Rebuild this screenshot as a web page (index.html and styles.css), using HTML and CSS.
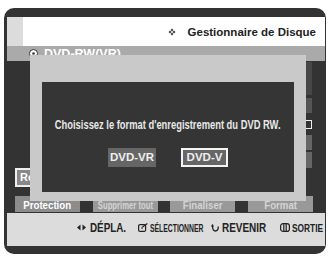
FILE: index.html
```html
<!DOCTYPE html>
<html>
<head>
    <title>Gestionnaire de Disque</title>
    <link rel="stylesheet" href="styles.css">
</head>
<body>
    <div class="frame">
        <div class="screen">
            <div class="top">
                <div class="tab"></div>
                <div class="title">
                    <svg class="title-icon" width="8" height="8" viewBox="0 0 8 8">
                        <path d="M4 0.5 L5.5 2 L4 3.5 L2.5 2 Z M4 4.5 L5.5 6 L4 7.5 L2.5 6 Z M2 2.5 L3.5 4 L2 5.5 L0.5 4 Z M6 2.5 L7.5 4 L6 5.5 L4.5 4 Z" fill="#444"/>
                    </svg>
                    <span>Gestionnaire de Disque</span>
                </div>
            </div>
            <div class="disc-bar">
                <svg class="disc" width="9" height="9" viewBox="0 0 9 9">
                    <circle cx="4.5" cy="4.5" r="4" fill="#fff" stroke="#333" stroke-width="1"/>
                    <circle cx="4.5" cy="4.5" r="1.3" fill="#333"/>
                </svg>
                <span>DVD-RW(VR)</span>
            </div>
            <div class="content">
                <div class="info-row row-a"></div>
                <div class="info-row row-b"></div>
                <div class="info-row row-check"><span class="check"></span></div>
                <div class="info-row row-c"></div>
                <div class="info-row row-d"></div>
                <div class="rename-btn">Renommer</div>
            </div>
            <div class="actions">
                <div class="action current"><span class="narrow">Protection</span></div>
                <div class="action"><span class="narrow tight">Supprimer tout</span></div>
                <div class="action"><span class="narrow">Finaliser</span></div>
                <div class="action"><span class="narrow">Format</span></div>
            </div>
            <div class="hints">
                <div class="hint hint-move">
                    <svg width="9" height="7" viewBox="0 0 9 7"><path d="M0 3.5 L3.5 0.5 L3.5 6.5 Z M9 3.5 L5.5 0.5 L5.5 6.5 Z" fill="#222"/></svg>
                    <span class="hint-text">DÉPLA.</span>
                </div>
                <div class="hint hint-select">
                    <svg width="10" height="9" viewBox="0 0 10 9"><rect x="0.6" y="1.6" width="7" height="6.8" rx="1.5" fill="none" stroke="#222" stroke-width="1.2"/><path d="M3 5 L5 5 M4.5 4 L9.4 0.6" stroke="#222" stroke-width="1.2" fill="none"/></svg>
                    <span class="hint-text">SÉLECTIONNER</span>
                </div>
                <div class="hint hint-back">
                    <svg width="8" height="9" viewBox="0 0 8 9"><path d="M1.5 3 C1.5 6 2.5 8 4.5 8 C6.5 8 7.3 6 7.3 3.5" stroke="#222" stroke-width="1.3" fill="none"/><path d="M0 3.6 L1.5 0.8 L3 3.6 Z" fill="#222"/></svg>
                    <span class="hint-text">REVENIR</span>
                </div>
                <div class="hint hint-exit">
                    <svg width="10" height="9" viewBox="0 0 10 9"><rect x="0.6" y="0.6" width="8.8" height="7.8" rx="2.5" fill="none" stroke="#222" stroke-width="1.2"/><path d="M3.8 1 L3.8 8 M6.2 1 L6.2 8" stroke="#222" stroke-width="1.2"/></svg>
                    <span class="hint-text">SORTIE</span>
                </div>
            </div>

            <div class="dialog">
                <div class="dialog-body">
                    <p class="message">Choisissez le format d'enregistrement du DVD RW.</p>
                    <div class="choices">
                        <div class="choice">DVD-VR</div>
                        <div class="choice selected">DVD-V</div>
                    </div>
                </div>
            </div>
        </div>
    </div>
</body>
</html>
```

FILE: styles.css
```css
body {
    margin: 0;
    background: #fff;
    font-family: "Liberation Sans", Arial, sans-serif;
}

.frame {
    margin: 8px 0 0 4px;
    width: 322px;
    height: 246px;
    box-sizing: border-box;
    padding: 9px 2px 8px 3px;
    background: #333;
    border-radius: 10px;
}

.screen {
    position: relative;
    width: 318px;
    height: 229px;
    display: flex;
    flex-direction: column;
    background: #333;
}

.top {
    height: 29px;
    display: flex;
}

.tab {
    width: 16px;
    background: #dcdcdc;
}

.title {
    flex: 1;
    background: #fff;
    display: flex;
    align-items: center;
    justify-content: flex-end;
    padding-right: 9px;
    font-size: 11.5px;
    font-weight: bold;
    color: #222;
}

.title-icon {
    margin-right: 12px;
}

.disc-bar {
    height: 15px;
    background: #aaa;
    display: flex;
    align-items: center;
    padding-left: 22px;
    color: #fff;
    font-size: 12.5px;
    font-weight: bold;
}

.disc {
    margin-right: 6px;
}

.content {
    flex: 1;
    display: flex;
    flex-direction: column;
    padding-top: 1px;
}

.info-row {
    margin-left: 100px;
    width: 205px;
}

.row-a {
    height: 33px;
    background: #474747;
}

.row-b {
    height: 15px;
    margin-top: 3px;
    background: #555;
}

.row-check {
    height: 10px;
    margin-top: 7px;
    display: flex;
    justify-content: flex-end;
}

.check {
    width: 7px;
    height: 9px;
    box-sizing: border-box;
    border: 1.5px solid #eee;
}

.row-c {
    height: 15px;
    margin-top: 5px;
    background: #666;
}

.row-d {
    height: 16px;
    margin-top: 2px;
    background: #666;
}

.rename-btn {
    margin-left: 8px;
    width: 60px;
    height: 19px;
    box-sizing: border-box;
    border: 2px solid #eee;
    background: #888;
    color: #fff;
    font-size: 11px;
    font-weight: bold;
    line-height: 15px;
    padding-left: 3px;
}

.actions {
    height: 16px;
    display: flex;
    justify-content: space-between;
    padding: 0 12px 0 8px;
    margin-bottom: 1px;
}

.action {
    width: 65px;
    box-sizing: border-box;
    padding-top: 3px;
    background: #999;
    color: #d4d4d4;
    font-size: 11px;
    font-weight: bold;
    line-height: 13px;
    display: flex;
    justify-content: center;
}

.action.current {
    background: #8c8c8c;
    color: #fff;
}

.narrow {
    display: inline-block;
    white-space: nowrap;
    flex-shrink: 0;
    transform: scaleX(0.88);
}

.narrow.tight {
    transform: scaleX(0.7);
}

.hints {
    height: 33px;
    background: #dcdcdc;
    display: flex;
    align-items: center;
    padding: 0 0 4px 70px;
    box-sizing: border-box;
    font-weight: bold;
    font-size: 12px;
    color: #222;
}

.hint {
    display: flex;
    align-items: center;
    flex-shrink: 0;
}

.hint svg {
    flex-shrink: 0;
}

.hint-text {
    display: inline-block;
    white-space: nowrap;
    flex-shrink: 0;
    transform-origin: left center;
}

.hint-move {
    width: 61px;
}

.hint-move .hint-text {
    margin-left: 4px;
    transform: scaleX(0.82);
}

.hint-select {
    width: 73px;
}

.hint-select .hint-text {
    margin-left: 2px;
    font-size: 11px;
    transform: scaleX(0.62);
}

.hint-back {
    width: 69px;
}

.hint-back .hint-text {
    margin-left: 3px;
    transform: scaleX(0.83);
}

.hint-exit .hint-text {
    margin-left: 2px;
    font-size: 11px;
    transform: scaleX(0.76);
}

.dialog {
    position: absolute;
    left: 23px;
    top: 38px;
    width: 276px;
    height: 146px;
    box-sizing: border-box;
    padding: 27px 12px 9px;
    background: #c9c9c9;
}

.dialog-body {
    height: 100%;
    background: #353535;
    display: flex;
    flex-direction: column;
    align-items: center;
    padding-top: 37px;
    box-sizing: border-box;
}

.message {
    margin: 0 0 16px;
    font-size: 12px;
    font-weight: bold;
    line-height: 13px;
    color: #e8e8e8;
    white-space: nowrap;
    flex-shrink: 0;
    transform: scaleX(0.78);
}

.choices {
    display: flex;
    gap: 25px;
}

.choice {
    width: 48px;
    height: 19px;
    box-sizing: border-box;
    background: #666;
    color: #eee;
    font-size: 11.5px;
    font-weight: bold;
    text-align: center;
    line-height: 19px;
}

.choice.selected {
    width: 47px;
    border: 2px solid #f4f4f4;
    line-height: 15px;
}
```
